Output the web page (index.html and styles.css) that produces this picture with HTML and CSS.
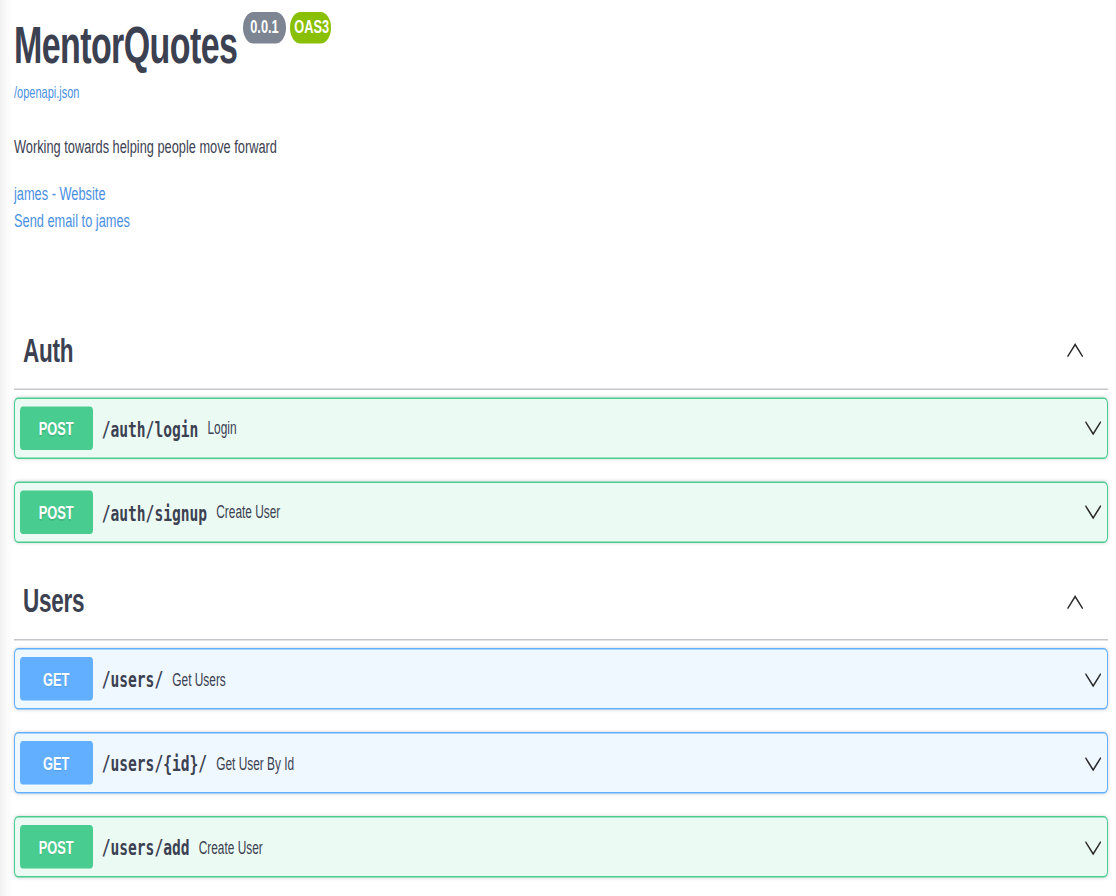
FILE: index.html
```html
<!DOCTYPE html>
<html lang="en">
<head>
<meta charset="utf-8">
<title>MentorQuotes</title>
<link rel="stylesheet" href="styles.css">
</head>
<body>
<div class="page">
  <div class="info">
    <div class="title-row">
      <h1 class="title">MentorQuotes</h1>
      <span class="badge badge-version">0.0.1</span>
      <span class="badge badge-oas">OAS3</span>
    </div>
    <a class="base-url" href="#">/openapi.json</a>
    <p class="desc">Working towards helping people move forward</p>
    <div class="contact">
      <a href="#">james - Website</a>
      <a href="#">Send email to james</a>
    </div>
  </div>

  <section class="tag-section">
    <h3 class="tag">
      <span class="tag-name">Auth</span>
      <svg class="tag-arrow" viewBox="0 0 20 20" preserveAspectRatio="none"><path d="M17.418 14.908c.272.268.709.268.979 0s.271-.701 0-.969l-7.908-7.83c-.27-.268-.707-.268-.979 0l-7.908 7.83c-.27.268-.27.701 0 .969.271.268.709.268.979 0L10 7.665l7.418 7.243z"/></svg>
    </h3>
    <div class="opblock opblock-post">
      <div class="summary">
        <span class="method">POST</span>
        <span class="path">/auth/login</span>
        <span class="summary-desc">Login</span>
        <svg class="op-arrow" viewBox="0 0 20 20" preserveAspectRatio="none"><path d="M17.418 6.109c.272-.268.709-.268.979 0s.271.701 0 .969l-7.908 7.83c-.27.268-.707.268-.979 0l-7.908-7.83c-.27-.268-.27-.701 0-.969.271-.268.709-.268.979 0L10 13.25l7.418-7.141z"/></svg>
      </div>
    </div>
    <div class="opblock opblock-post">
      <div class="summary">
        <span class="method">POST</span>
        <span class="path">/auth/signup</span>
        <span class="summary-desc">Create User</span>
        <svg class="op-arrow" viewBox="0 0 20 20" preserveAspectRatio="none"><path d="M17.418 6.109c.272-.268.709-.268.979 0s.271.701 0 .969l-7.908 7.83c-.27.268-.707.268-.979 0l-7.908-7.83c-.27-.268-.27-.701 0-.969.271-.268.709-.268.979 0L10 13.25l7.418-7.141z"/></svg>
      </div>
    </div>
  </section>

  <section class="tag-section">
    <h3 class="tag">
      <span class="tag-name">Users</span>
      <svg class="tag-arrow" viewBox="0 0 20 20" preserveAspectRatio="none"><path d="M17.418 14.908c.272.268.709.268.979 0s.271-.701 0-.969l-7.908-7.83c-.27-.268-.707-.268-.979 0l-7.908 7.83c-.27.268-.27.701 0 .969.271.268.709.268.979 0L10 7.665l7.418 7.243z"/></svg>
    </h3>
    <div class="opblock opblock-get">
      <div class="summary">
        <span class="method">GET</span>
        <span class="path">/users/</span>
        <span class="summary-desc">Get Users</span>
        <svg class="op-arrow" viewBox="0 0 20 20" preserveAspectRatio="none"><path d="M17.418 6.109c.272-.268.709-.268.979 0s.271.701 0 .969l-7.908 7.83c-.27.268-.707.268-.979 0l-7.908-7.83c-.27-.268-.27-.701 0-.969.271-.268.709-.268.979 0L10 13.25l7.418-7.141z"/></svg>
      </div>
    </div>
    <div class="opblock opblock-get">
      <div class="summary">
        <span class="method">GET</span>
        <span class="path">/users/{id}/</span>
        <span class="summary-desc">Get User By Id</span>
        <svg class="op-arrow" viewBox="0 0 20 20" preserveAspectRatio="none"><path d="M17.418 6.109c.272-.268.709-.268.979 0s.271.701 0 .969l-7.908 7.83c-.27.268-.707.268-.979 0l-7.908-7.83c-.27-.268-.27-.701 0-.969.271-.268.709-.268.979 0L10 13.25l7.418-7.141z"/></svg>
      </div>
    </div>
    <div class="opblock opblock-post">
      <div class="summary">
        <span class="method">POST</span>
        <span class="path">/users/add</span>
        <span class="summary-desc">Create User</span>
        <svg class="op-arrow" viewBox="0 0 20 20" preserveAspectRatio="none"><path d="M17.418 6.109c.272-.268.709-.268.979 0s.271.701 0 .969l-7.908 7.83c-.27.268-.707.268-.979 0l-7.908-7.83c-.27-.268-.27-.701 0-.969.271-.268.709-.268.979 0L10 13.25l7.418-7.141z"/></svg>
      </div>
    </div>
  </section>
</div>
</body>
</html>
```

FILE: styles.css
```css
html, body {
  margin: 0;
  padding: 0;
  overflow: hidden;
}

body {
  height: 896px;
  background: linear-gradient(to right, #f1f1f1 0, #f8f8f8 5px, #ffffff 13px);
}

/* The reference capture is stretched vertically: the page is drawn
   at 1.5x height. Widths are laid out at their real size. */
.page {
  width: 1116px;
  box-sizing: border-box;
  padding: 9.7px 8px 0 14px;
  transform: scaleY(1.5);
  transform-origin: 0 0;
  font-family: "Liberation Sans", Arial, sans-serif;
  color: #3b4151;
}

/* ---------- info ---------- */
.info {
  padding-bottom: 52.7px;
}

.title-row {
  display: flex;
  align-items: flex-start;
}

.title {
  margin: 0;
  font-size: 34px;
  font-weight: 700;
  letter-spacing: -0.6px;
  line-height: 41px;
  color: #3b4151;
}

.badge {
  margin-top: -1.7px;
  border-radius: 57px;
  font-size: 12.8px;
  font-weight: 700;
  line-height: 20.7px;
  color: #ffffff;
}

.badge-version {
  margin-left: 5.7px;
  padding: 0 7.3px;
  background: #7d8492;
}

.badge-oas {
  margin-left: 4px;
  padding: 0 1.6px 0 4.2px;
  background: #89bf04;
}

.base-url {
  display: block;
  margin-top: 3.3px;
  font-size: 11px;
  line-height: 14px;
  color: #4990e2;
  text-decoration: none;
}

.desc {
  margin: 21.8px 0 0;
  font-size: 12.8px;
  line-height: 16px;
  color: #3b4151;
}

.contact {
  display: flex;
  flex-direction: column;
  align-items: flex-start;
  margin-top: 14.6px;
}

.contact a {
  font-size: 12.8px;
  line-height: 18px;
  color: #4990e2;
  text-decoration: none;
}

/* ---------- tags ---------- */
.tag-section {
  display: flex;
  flex-direction: column;
}

.tag {
  display: flex;
  align-items: center;
  margin: 0 0 5px;
  padding: 10.5px 23.7px 11.5px 9.1px;
  font-size: 22.5px;
  font-weight: 700;
  letter-spacing: -0.3px;
  line-height: 27.6px;
  color: #3b4151;
  border-bottom: 1px solid rgba(59, 65, 81, 0.3);
}

.tag-name {
  flex: 1 1 auto;
}

.tag-arrow {
  flex: none;
  width: 18.3px;
  height: 20px;
  fill: #2b2b2b;
}

/* ---------- operations ---------- */
.opblock {
  margin: 0 0 15px;
  border: 1px solid #000;
  border-radius: 4px;
  box-shadow: 0 0 3px rgba(0, 0, 0, 0.19);
}

.tag-section:last-child .opblock:last-child {
  margin-bottom: 0;
}

.opblock-post {
  background: rgba(73, 204, 144, 0.1);
  border-color: #49cc90;
}

.opblock-get {
  background: rgba(97, 175, 254, 0.1);
  border-color: #61affe;
}

.summary {
  display: flex;
  align-items: center;
  padding: 5px 4.6px;
}

.method {
  flex: none;
  min-width: 73px;
  padding: 6px 0;
  border-radius: 3px;
  font-size: 12.8px;
  font-weight: 700;
  line-height: 17px;
  text-align: center;
  color: #ffffff;
  text-shadow: 0 1px 0 rgba(0, 0, 0, 0.1);
}

.opblock-post .method {
  background: #49cc90;
}

.opblock-get .method {
  background: #61affe;
}

.path {
  flex: none;
  padding: 0 9.1px;
  font-family: "DejaVu Sans Mono", monospace;
  font-size: 14.6px;
  font-weight: 700;
  color: #3b4151;
}

.summary-desc {
  flex: 1 1 auto;
  font-size: 11.9px;
  color: #3b4151;
}

.op-arrow {
  flex: none;
  width: 18.3px;
  height: 20px;
  fill: #2b2b2b;
}
```
